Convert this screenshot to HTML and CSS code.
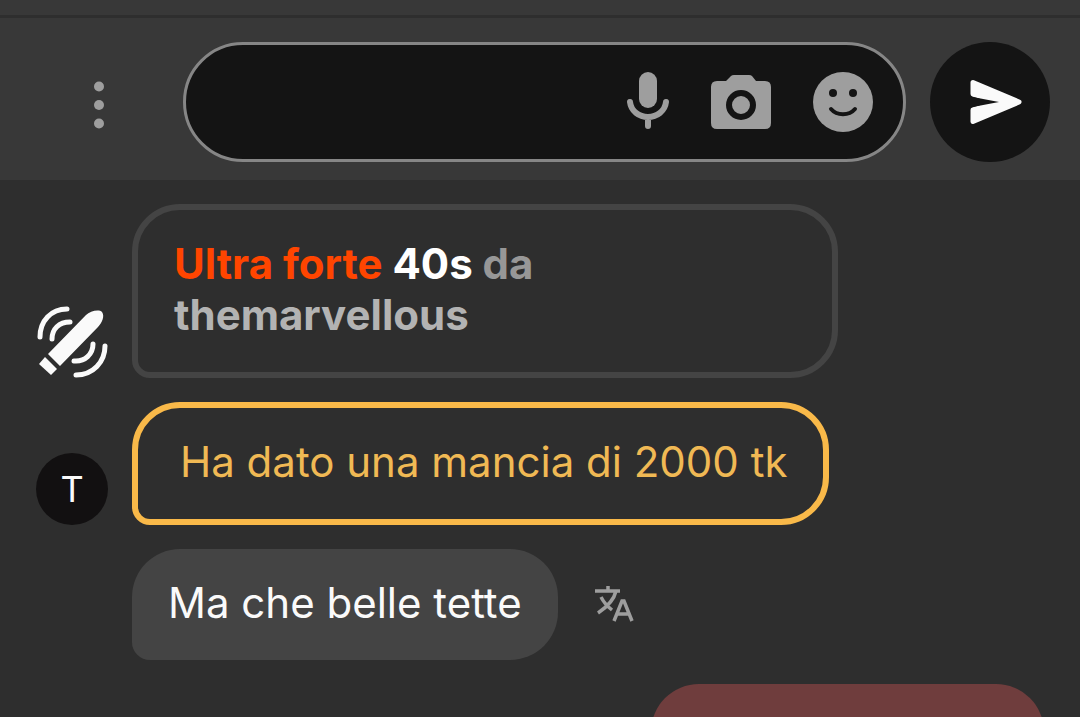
FILE: index.html
```
<!DOCTYPE html>
<html lang="it">
  <head>
    <meta charset="UTF-8" />
    <meta name="viewport" content="width=device-width, initial-scale=1.0" />
    <title>Chat</title>
    <link rel="stylesheet" href="styles.css">
  </head>
  <body>
    <div class="top-strip"></div>

    <form class="composer">
      <button type="button" class="icon-btn menu-btn" aria-label="Menu">
        <svg width="12" height="48" viewBox="0 0 12 48" fill="#9e9e9e">
          <circle cx="6" cy="5.5" r="5" />
          <circle cx="6" cy="24" r="5" />
          <circle cx="6" cy="42.5" r="5" />
        </svg>
      </button>

      <div class="field">
        <input type="text" class="field-input" aria-label="Messaggio" />
        <button type="button" class="icon-btn" aria-label="Microfono">
          <svg width="42" height="60" viewBox="0 0 42 60">
            <rect x="12" y="0" width="18" height="36" rx="9" fill="#9e9e9e" />
            <path d="M3 30C4 39 12 45 21 45S38 39 39 30M21 45V54" fill="none" stroke="#9e9e9e" stroke-width="6" stroke-linecap="round" />
          </svg>
        </button>
        <button type="button" class="icon-btn" aria-label="Fotocamera">
          <svg width="60" height="60" viewBox="0 0 60 60">
            <path d="M6 9H15L20 4Q21 3 23 3H38Q40 3 41 4L45 9H54Q60 9 60 15V51Q60 57 54 57H6Q0 57 0 51V15Q0 9 6 9Z" fill="#9e9e9e" />
            <circle cx="30" cy="33" r="12" fill="none" stroke="#141414" stroke-width="6" />
          </svg>
        </button>
        <button type="button" class="icon-btn" aria-label="Emoji">
          <svg width="60" height="60" viewBox="0 0 60 60">
            <circle cx="30" cy="30" r="30" fill="#9e9e9e" />
            <circle cx="20" cy="21" r="4" fill="#141414" />
            <circle cx="40" cy="21" r="4" fill="#141414" />
            <path d="M18 37C24 44 36 44 42 37" fill="none" stroke="#141414" stroke-width="4" stroke-linecap="round" />
          </svg>
        </button>
      </div>

      <button type="submit" class="send-btn" aria-label="Invia">
        <svg width="120" height="120" viewBox="0 0 120 120">
          <path d="M43 40.5L89 60L43 79.5V68L69 60L43 52Z" fill="#fafafa" stroke="#fafafa" stroke-width="5" stroke-linejoin="round" />
          <path d="M40 54.5L69 60L40 65.5Z" fill="#141414" />
        </svg>
      </button>
    </form>

    <main class="chat">
      <div class="message">
        <svg class="avatar" width="72" height="72" viewBox="0 0 72 72">
          <path d="M12 48L50 9C54 5 63 3 66 6C69 10 66 17 62 21L24 60Z" fill="#fafafa" />
          <path d="M9 51L21 63L15 69L3 58Z" fill="#fafafa" />
          <g fill="none" stroke="#fafafa" stroke-width="5" stroke-linecap="round">
            <path d="M4 31C4 15 15 3 31 3" />
            <path d="M16 33C16 23 23 16 34 16" />
            <path d="M57 38C57 48 49 56 38 55" />
            <path d="M69 40C69 56 57 69 40 69" />
          </g>
        </svg>
        <p class="bubble bubble-toy">
          <span class="level">Ultra forte</span> <span class="time">40s</span> da
          <span class="user">themarvellous</span>
        </p>
      </div>

      <div class="message">
        <span class="avatar avatar-letter">T</span>
        <p class="bubble bubble-tip">Ha dato una mancia di 2000 tk</p>
      </div>

      <div class="message message-next">
        <p class="bubble">Ma che belle tette</p>
        <button type="button" class="icon-btn translate-btn" aria-label="Traduci">
          <svg width="40" height="38" viewBox="0 0 40 38" fill="none" stroke="#9e9e9e" stroke-width="3.5">
            <path d="M1 5H26M14 0V5M22 5C20 14 13 21 4 27M7 11C9 15 13 20 18 24" />
            <path d="M20 35L28 15H30L38 35M23 28H35" />
          </svg>
        </button>
      </div>

      <div class="message message-own">
        <p class="bubble bubble-own"></p>
      </div>
    </main>
  </body>
</html>
```

FILE: styles.css
```
* {
  box-sizing: border-box;
}

body {
  margin: 0;
  height: 100vh;
  overflow: hidden;
  background: #2e2e2e;
  color: #fafafa;
  font-family: Inter, sans-serif;
  font-size: 42px;
  line-height: 51px;
}

button {
  padding: 0;
  border: none;
  background: none;
  cursor: pointer;
}

svg {
  display: block;
  overflow: visible;
}

.top-strip {
  height: 18px;
  background: #383838;
  border-bottom: 3px solid #2e2e2e;
}

.composer {
  display: flex;
  align-items: center;
  gap: 24px;
  padding: 24px 30px 18px;
  background: #383838;
}

.icon-btn {
  flex: none;
}

.menu-btn {
  display: flex;
  justify-content: center;
  width: 129px;
  padding-top: 6px;
  padding-left: 8px;
}

.field {
  flex: 1;
  min-width: 0;
  display: flex;
  align-items: center;
  gap: 42px;
  height: 120px;
  padding: 0 30px 0 36px;
  border: 3px solid #868686;
  border-radius: 60px;
  background: #141414;
}

.field-input {
  flex: 1;
  min-width: 0;
  border: none;
  outline: none;
  background: none;
  color: #fafafa;
  font: inherit;
}

.send-btn {
  flex: none;
  width: 120px;
  height: 120px;
  border-radius: 50%;
  background: #141414;
}

.chat {
  display: flex;
  flex-direction: column;
  gap: 24px;
  padding: 24px 36px;
}

.message {
  display: flex;
  align-items: flex-end;
  gap: 24px;
}

.message-next {
  align-items: center;
  gap: 36px;
  padding-left: 96px;
}

.message-own {
  justify-content: flex-end;
}

.avatar {
  flex: none;
  width: 72px;
  height: 72px;
}

.avatar-letter {
  display: flex;
  align-items: center;
  justify-content: center;
  border-radius: 50%;
  background: #121011;
  font-size: 36px;
}

.bubble {
  margin: 0;
  padding: 28px 36px 32px;
  border-radius: 48px 48px 48px 18px;
  background: #444;
}

.bubble-toy {
  max-width: 706px;
  padding-right: 240px;
  border: 6px solid #444;
  background: none;
  color: #979797;
  font-weight: 700;
}

.level {
  color: #ff4500;
}

.time {
  color: #fff;
}

.user {
  color: #b3b3b3;
}

.bubble-tip {
  padding-left: 42px;
  padding-right: 36px;
  border: 6px solid #f9b949;
  background: none;
  color: #f0b954;
}

.bubble-own {
  width: 393px;
  height: 111px;
  border-radius: 48px 48px 18px 48px;
  background: #6f3d3d;
}
```
